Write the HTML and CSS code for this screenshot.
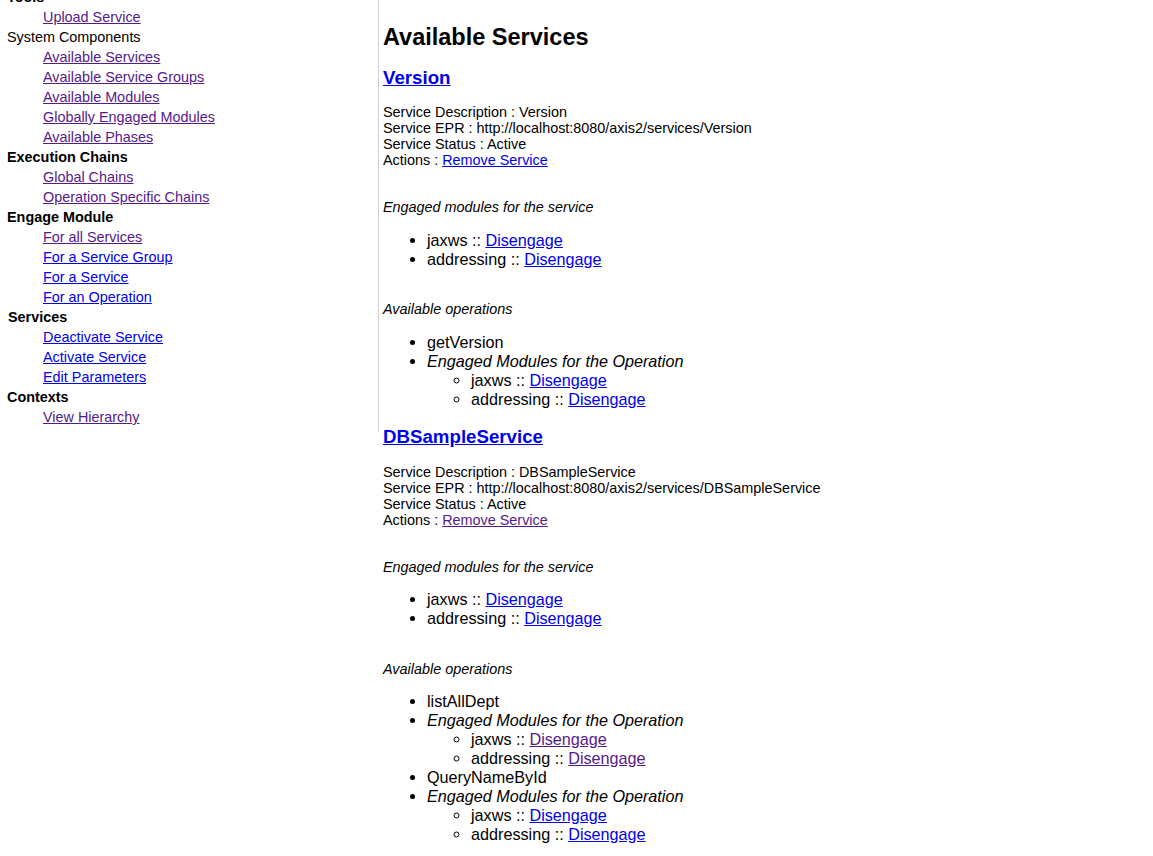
FILE: index.html
```html
<!DOCTYPE html>
<html>
<head>
<meta charset="utf-8">
<title>Axis2 - Available Services</title>
<link rel="stylesheet" href="styles.css">
</head>
<body>
<div class="page">
  <nav class="nav">
    <div class="nav-head">Tools</div>
    <a class="nav-link visited" href="#">Upload Service</a>
    <div class="nav-head plain">System Components</div>
    <a class="nav-link visited" href="#">Available Services</a>
    <a class="nav-link visited" href="#">Available Service Groups</a>
    <a class="nav-link visited" href="#">Available Modules</a>
    <a class="nav-link visited" href="#">Globally Engaged Modules</a>
    <a class="nav-link visited" href="#">Available Phases</a>
    <div class="nav-head">Execution Chains</div>
    <a class="nav-link visited" href="#">Global Chains</a>
    <a class="nav-link visited" href="#">Operation Specific Chains</a>
    <div class="nav-head">Engage Module</div>
    <a class="nav-link visited" href="#">For all Services</a>
    <a class="nav-link" href="#">For a Service Group</a>
    <a class="nav-link" href="#">For a Service</a>
    <a class="nav-link" href="#">For an Operation</a>
    <div class="nav-head shifted">Services</div>
    <a class="nav-link" href="#">Deactivate Service</a>
    <a class="nav-link" href="#">Activate Service</a>
    <a class="nav-link" href="#">Edit Parameters</a>
    <div class="nav-head">Contexts</div>
    <a class="nav-link visited" href="#">View Hierarchy</a>
  </nav>

  <main class="content">
    <h2 class="title">Available Services</h2>

    <section class="service">
      <h3 class="service-name"><a href="#">Version</a></h3>
      <p class="info">
        Service Description : Version<br>
        Service EPR : http://localhost:8080/axis2/services/Version<br>
        Service Status : Active<br>
        Actions : <a href="#">Remove Service</a>
      </p>
      <p class="label">Engaged modules for the service</p>
      <ul class="list">
        <li>jaxws :: <a href="#">Disengage</a></li>
        <li>addressing :: <a href="#">Disengage</a></li>
      </ul>
      <p class="label ops">Available operations</p>
      <ul class="list">
        <li>getVersion</li>
        <li><i>Engaged Modules for the Operation</i>
          <ul class="sublist">
            <li>jaxws :: <a href="#">Disengage</a></li>
            <li>addressing :: <a href="#">Disengage</a></li>
          </ul>
        </li>
      </ul>
    </section>

    <section class="service second">
      <h3 class="service-name"><a href="#">DBSampleService</a></h3>
      <p class="info">
        Service Description : DBSampleService<br>
        Service EPR : http://localhost:8080/axis2/services/DBSampleService<br>
        Service Status : Active<br>
        Actions : <a class="visited" href="#">Remove Service</a>
      </p>
      <p class="label">Engaged modules for the service</p>
      <ul class="list">
        <li>jaxws :: <a href="#">Disengage</a></li>
        <li>addressing :: <a href="#">Disengage</a></li>
      </ul>
      <p class="label ops">Available operations</p>
      <ul class="list">
        <li>listAllDept</li>
        <li><i>Engaged Modules for the Operation</i>
          <ul class="sublist">
            <li>jaxws :: <a class="visited" href="#">Disengage</a></li>
            <li>addressing :: <a class="visited" href="#">Disengage</a></li>
          </ul>
        </li>
        <li>QueryNameById</li>
        <li><i>Engaged Modules for the Operation</i>
          <ul class="sublist">
            <li>jaxws :: <a href="#">Disengage</a></li>
            <li>addressing :: <a href="#">Disengage</a></li>
          </ul>
        </li>
      </ul>
    </section>
  </main>
</div>
</body>
</html>
```

FILE: styles.css
```css
html, body {
  margin: 0;
  padding: 0;
  background: #ffffff;
}

body {
  font-family: "Liberation Sans", Arial, sans-serif;
  color: #000000;
  overflow: hidden;
}

a {
  color: #0000ee;
  text-decoration: underline;
}

a.visited {
  color: #551a8b;
}

.page {
  display: flex;
  align-items: flex-start;
  margin-top: -13px;
}

.nav {
  width: 371px;
  flex: none;
  display: flex;
  flex-direction: column;
  align-items: flex-start;
  padding: 0 0 5px 7px;
  border-right: 1px solid #d0d0d0;
  font-size: 14.4px;
}

.nav-head {
  line-height: 20px;
  font-weight: bold;
}

.nav-head.plain {
  font-weight: normal;
}

.nav-head.shifted {
  padding-left: 1px;
}

.nav-link {
  line-height: 20px;
  margin-left: 36px;
}

.content {
  flex: 1;
  padding: 36px 0 0 4px;
}

.title {
  margin: 0;
  font-size: 23.5px;
  line-height: 28px;
  font-weight: bold;
}

.service-name {
  margin: 16px 0 0;
  font-size: 18.7px;
  line-height: 22px;
  font-weight: bold;
}

.info {
  margin: 15px 0 0;
  font-size: 14.4px;
  line-height: 16px;
}

.label {
  margin: 31px 0 0;
  font-size: 14.4px;
  line-height: 16px;
  font-style: italic;
}

.label.ops {
  margin-top: 32px;
}

.list {
  margin: 16px 0 0;
  padding-left: 44px;
  font-size: 16.2px;
  line-height: 19px;
  list-style-type: disc;
}

.sublist {
  margin: 0;
  padding-left: 44px;
  list-style-type: circle;
}

.second .service-name {
  margin-top: 17px;
}

.second .info {
  margin-top: 16px;
}

.second .list {
  margin-top: 15px;
}

.second .label.ops {
  margin-top: 33px;
}
```
